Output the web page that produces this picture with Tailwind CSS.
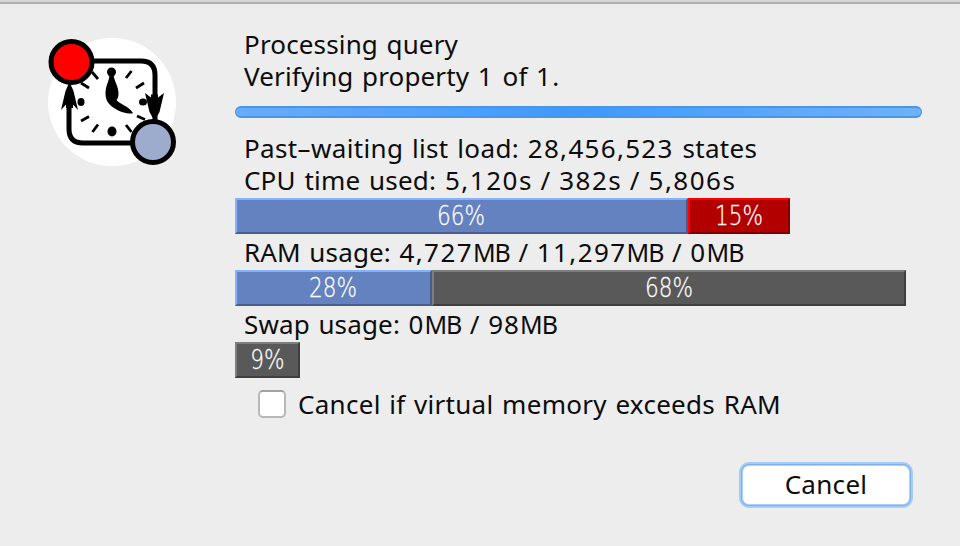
<!DOCTYPE html>
<html lang="en">
<head>
<meta charset="utf-8">
<title>Processing query</title>
<script src="https://cdn.jsdelivr.net/npm/@tailwindcss/browser@4"></script>
</head>
<body class="w-[960px] h-[546px] overflow-hidden bg-[#ededed] font-['Noto_Sans',sans-serif] text-[26px] leading-8 text-[#0c0c0c]">
<div class="h-1 bg-[#d6d6d6] border-b-2 border-[#b0b0b0]"></div>
<main class="flex h-[542px] pl-12">
  <svg class="mt-[33px] w-[130px] h-[130px] shrink-0" viewBox="48 37 130 130" fill="none" stroke="#000">
    <circle cx="112" cy="102" r="64" fill="#fff" stroke="none"/>
    <path stroke-width="2.800" d="M131.500 71l-5.500 7M144 83l-8 5M92 72l6 7M81 83l8 5M81 121l8-4.500M92.500 132l5.500-7.500M131.500 132l-5.500-7M145 119.500l-8-3.500"/>
    <g fill="#000" stroke="none">
      <circle cx="111.500" cy="72" r="4.500"/><ellipse cx="81" cy="102" rx="3.500" ry="4"/><ellipse cx="143" cy="102" rx="4" ry="3.500"/><ellipse cx="112" cy="131.500" rx="4.500" ry="5"/>
      <path d="M109.500 74h4c0 6 5 12 5 19 0 4-1 6-2 7 3 4 12 6 16.500 13-1.500 1.500-12 0-19-5-6-4-8.500-8-8.500-15 0-8 4-12 4-19z"/>
      <path d="M69.500 82l4 9 4.500 19-5-5.500v3.500h-7v-3.500l-5 5.500 4.500-19zM154.500 121l-5-9-4.500-19 6 4.500v-3h7v3l6-4.500-4.500 19z"/>
    </g>
    <path d="M90 61h51q14 0 14 14v50M136 143H83q-14 0-14-14V90" stroke-width="5"/>
    <circle cx="71.500" cy="62" r="20.500" fill="#f00" stroke-width="5"/>
    <circle cx="153" cy="142" r="20.500" fill="#9dabcc" stroke-width="5"/>
  </svg>
  <div class="ml-14 w-[688px] mt-6 flex flex-col items-start whitespace-pre [word-spacing:1.6px] tracking-[0.15px]">
    <p class="pl-[10px]">Processing query</p>
    <p class="pl-[10px]">Verifying property <span class="tracking-[1.4px]">1</span> of <span class="tracking-[1.4px]">1</span>.</p>
    <div class="mt-[14px] mb-[14px] ml-px h-3 w-[687px] rounded-full border-y-2 border-x border-[#4e95e0] bg-linear-to-r from-[#66acff] via-[#3c99ff] to-[#6db2ff]"></div>
    <p class="pl-[10px] tracking-[0.35px]">Past–waiting list load: <span class="tracking-[1.3px]">28,456,523</span> states</p>
    <p class="pl-[10px] [word-spacing:2px]">CPU time used: <span class="tracking-[1.5px]">5,120</span>s / <span class="tracking-[1.5px]">382</span>s / <span class="tracking-[1.5px]">5,806</span>s</p>
    <div class="mt-0.5 ml-px flex h-9 text-center font-['DejaVu_Sans',sans-serif] font-extralight text-[27px] text-white tracking-normal [-webkit-text-stroke:0.3px_white]">
      <div class="w-[453px] border-2 border-t-[#85b2ff] border-l-[#85b2ff] border-r-[#485d8a] border-b-[#485d8a] bg-[#6382bf]"><span class="inline-block scale-x-[.8]">66%</span></div>
      <div class="w-[102px] border-2 border-t-[#ff0000] border-l-[#ff0000] border-r-[#7c0000] border-b-[#7c0000] bg-[#b20000]"><span class="inline-block scale-x-[.8]">15%</span></div>
    </div>
    <p class="mt-0.5 h-8 pl-[10px]">RAM usage: <span class="tracking-[1.4px]">4,727</span><span class="text-[25px] tracking-[-1px]">MB</span> / <span class="tracking-[1.4px]">11,297</span><span class="text-[25px] tracking-[-1px]">MB</span> / <span class="tracking-[1.4px]">0</span><span class="text-[25px] tracking-[-1px]">MB</span></p>
    <div class="mt-0.5 ml-px flex h-9 text-center font-['DejaVu_Sans',sans-serif] font-extralight text-[27px] text-white tracking-normal [-webkit-text-stroke:0.3px_white]">
      <div class="w-[197px] border-2 border-t-[#85b2ff] border-l-[#85b2ff] border-r-[#485d8a] border-b-[#485d8a] bg-[#6382bf]"><span class="inline-block scale-x-[.8]">28%</span></div>
      <div class="w-[474px] border-2 border-t-[#7d7d7d] border-l-[#7d7d7d] border-r-[#3e3e3e] border-b-[#3e3e3e] bg-[#595959]"><span class="inline-block scale-x-[.8]">68%</span></div>
    </div>
    <p class="mt-0.5 h-8 pl-[10px]">Swap usage: <span class="tracking-[1px]">0</span><span class="text-[25px] tracking-[-1px]">MB</span> / <span class="tracking-[1px]">98</span><span class="text-[25px] tracking-[-1px]">MB</span></p>
    <div class="mt-0.5 ml-px flex h-9 text-center font-['DejaVu_Sans',sans-serif] font-extralight text-[27px] text-white tracking-normal [-webkit-text-stroke:0.3px_white]">
      <div class="w-[65px] border-2 border-t-[#7d7d7d] border-l-[#7d7d7d] border-r-[#3e3e3e] border-b-[#3e3e3e] bg-[#595959]"><span class="inline-block scale-x-[.8]">9%</span></div>
    </div>
    <label class="mt-[10px] ml-6 flex h-8 items-center tracking-[0.28px]"><i class="mr-3 size-7 rounded-[5px] border-2 border-[#b8b8b8] border-t-[#a2a2a2] bg-white"></i>Cancel if virtual memory exceeds RAM</label>
    <button class="mt-[42px] ml-[505px] flex h-[46px] w-[174px] items-center justify-center rounded-[10px] border-2 border-[#a4ccf5] bg-[#7fb1e6] p-0.5 tracking-[0.3px]"><span class="flex h-full w-full items-center justify-center rounded-[6px] bg-white pb-0.5 ring-1 ring-[#a9d2fd]">Cancel</span></button>
  </div>
</main>
</body>
</html>
